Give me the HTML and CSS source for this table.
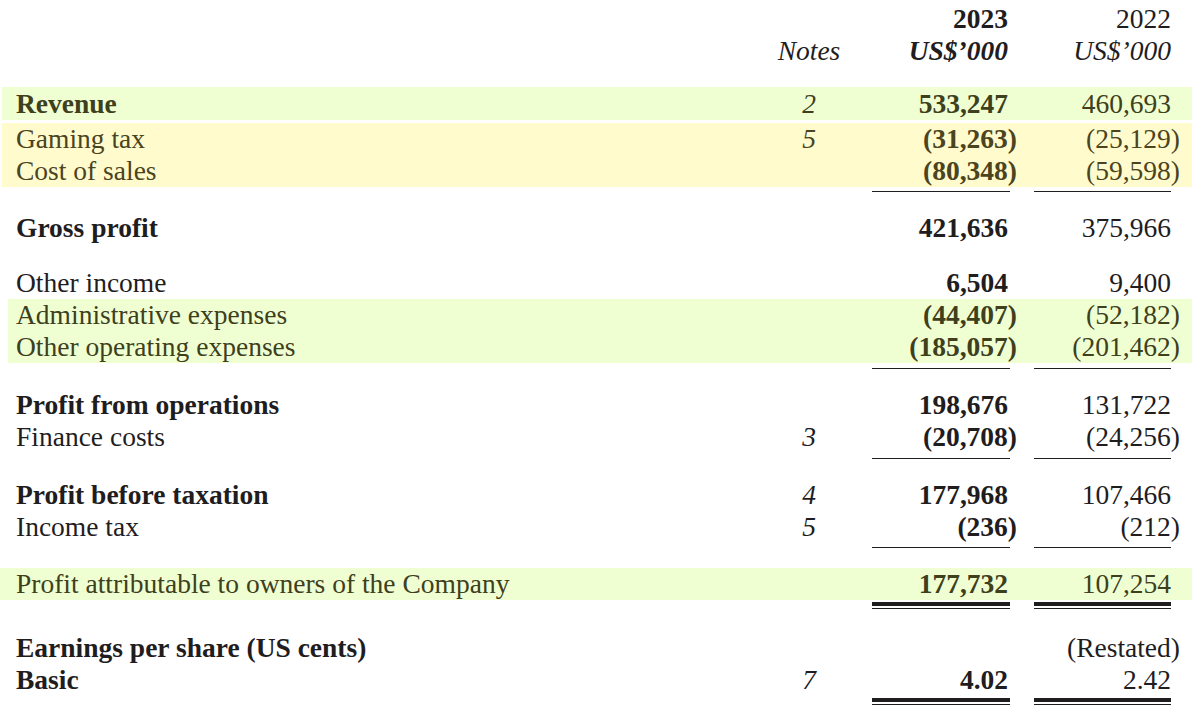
FILE: index.html
```html
<!DOCTYPE html>
<html lang="en">
<head>
<meta charset="utf-8">
<title>Consolidated statement of profit or loss</title>
<link rel="stylesheet" href="styles.css">
</head>
<body>
<div class="stmt">
  <div class="row h1">
    <span></span><span></span>
    <span class="amt cur">2023</span>
    <span class="amt">2022</span>
  </div>
  <div class="row h2">
    <span></span>
    <span class="note">Notes</span>
    <span class="amt cur it">US$’000</span>
    <span class="amt it">US$’000</span>
  </div>

  <div class="hl green hl-rev">
    <div class="row bold">
      <span class="lbl">Revenue</span><span class="note">2</span>
      <span class="amt cur">533,247</span><span class="amt">460,693</span>
    </div>
  </div>

  <div class="hl yellow hl-cost">
    <div class="row">
      <span class="lbl">Gaming tax</span><span class="note">5</span>
      <span class="amt cur">(31,263<span class="cp">)</span></span><span class="amt">(25,129<span class="cp">)</span></span>
    </div>
    <div class="row">
      <span class="lbl">Cost of sales</span><span class="note"></span>
      <span class="amt cur">(80,348<span class="cp">)</span></span><span class="amt">(59,598<span class="cp">)</span></span>
    </div>
  </div>
  <div class="row rule r1"><span></span><span></span><span class="line"></span><span class="line"></span></div>

  <div class="row bold gp">
    <span class="lbl">Gross profit</span><span class="note"></span>
    <span class="amt cur">421,636</span><span class="amt">375,966</span>
  </div>

  <div class="row oi">
    <span class="lbl">Other income</span><span class="note"></span>
    <span class="amt cur">6,504</span><span class="amt">9,400</span>
  </div>
  <div class="hl green hl-exp">
    <div class="row">
      <span class="lbl">Administrative expenses</span><span class="note"></span>
      <span class="amt cur">(44,407<span class="cp">)</span></span><span class="amt">(52,182<span class="cp">)</span></span>
    </div>
    <div class="row">
      <span class="lbl">Other operating expenses</span><span class="note"></span>
      <span class="amt cur">(185,057<span class="cp">)</span></span><span class="amt">(201,462<span class="cp">)</span></span>
    </div>
  </div>
  <div class="row rule r2"><span></span><span></span><span class="line"></span><span class="line"></span></div>

  <div class="row bold gap20">
    <span class="lbl">Profit from operations</span><span class="note"></span>
    <span class="amt cur">198,676</span><span class="amt">131,722</span>
  </div>
  <div class="row">
    <span class="lbl">Finance costs</span><span class="note">3</span>
    <span class="amt cur">(20,708<span class="cp">)</span></span><span class="amt">(24,256<span class="cp">)</span></span>
  </div>
  <div class="row rule r2"><span></span><span></span><span class="line"></span><span class="line"></span></div>

  <div class="row bold gap20">
    <span class="lbl">Profit before taxation</span><span class="note">4</span>
    <span class="amt cur">177,968</span><span class="amt">107,466</span>
  </div>
  <div class="row">
    <span class="lbl">Income tax</span><span class="note">5</span>
    <span class="amt cur">(236<span class="cp">)</span></span><span class="amt">(212<span class="cp">)</span></span>
  </div>
  <div class="row rule r3"><span></span><span></span><span class="line"></span><span class="line"></span></div>

  <div class="hl green hl-pat">
    <div class="row">
      <span class="lbl">Profit attributable to owners of the Company</span><span class="note"></span>
      <span class="amt cur">177,732</span><span class="amt">107,254</span>
    </div>
  </div>
  <div class="row dbl d1"><span></span><span></span><span class="line"></span><span class="line"></span></div>

  <div class="row bold eps">
    <span class="lbl">Earnings per share (US cents)</span><span class="note"></span>
    <span class="amt cur"></span><span class="amt reg">(Restated<span class="cp">)</span></span>
  </div>
  <div class="row bold">
    <span class="lbl">Basic</span><span class="note">7</span>
    <span class="amt cur">4.02</span><span class="amt">2.42</span>
  </div>
  <div class="row dbl d2"><span></span><span></span><span class="line"></span><span class="line"></span></div>
</div>
</body>
</html>
```

FILE: styles.css
```css
html, body {
  margin: 0;
  padding: 0;
  background: #ffffff;
}

.stmt {
  width: 1192px;
  font-family: "Liberation Serif", "Times New Roman", serif;
  font-size: 27.5px;
  line-height: 32px;
  color: #1f1d1e;
  display: flex;
  flex-direction: column;
}

.row {
  display: grid;
  grid-template-columns: 1fr 78px 138px 137px;
  column-gap: 24px;
  padding: 0 21px 0 16px;
  height: 32px;
  white-space: nowrap;
}

.row.bold .lbl { font-weight: bold; }

.note {
  text-align: center;
  font-style: italic;
}

.amt {
  text-align: right;
}

.amt.cur {
  font-weight: bold;
  padding-right: 2px;
}

.amt.reg { font-weight: normal; }

.it { font-style: italic; }

.cp {
  margin-right: -9px;
}

.h1 { margin-top: 3px; }

/* highlights */
.hl { display: flex; flex-direction: column; }
.green { background: linear-gradient(90deg, transparent 2px, #f0ffd1 2px); color: #3e401d; }
.yellow { background: linear-gradient(90deg, transparent 2px, #fffbcd 2px); color: #4b4420; }

.hl-rev { margin-top: 20px; }
.hl-rev .row { padding-top: 1px; }
.hl-cost { margin-top: 3px; }
.hl-exp { background: linear-gradient(90deg, transparent 8px, #f0ffd1 8px); }
.hl-pat { margin-top: 20px; background: #f0ffd1; }

/* rules */
.rule { height: 1px; }
.rule .line { background: #1f1d1e; height: 1px; }
.r1 { margin-top: 4px; }
.r2 { margin-top: 5px; }
.r3 { margin-top: 4px; }

.dbl { height: 7px; }
.dbl .line {
  height: 2px;
  border-top: 4px solid #1f1d1e;
  border-bottom: 1px solid #1f1d1e;
}
.d1 { margin-top: 2px; }
.d2 { margin-top: 2px; }

.gp { margin-top: 20px; }
.oi { margin-top: 23px; }
.gap20 { margin-top: 20px; }
.eps { margin-top: 23px; }
```
